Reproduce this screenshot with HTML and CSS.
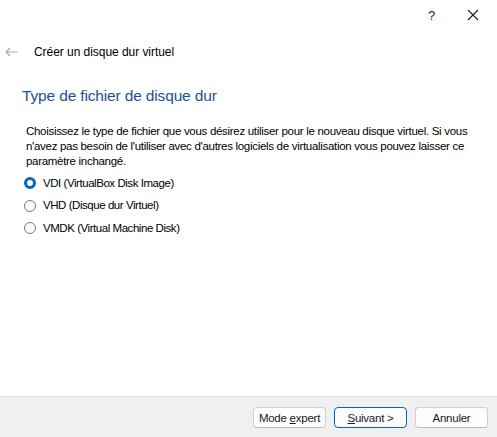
FILE: index.html
```html
<!DOCTYPE html>
<html lang="fr">
<head>
	<meta charset="utf-8" />
	<title>Créer un disque dur virtuel</title>
	<link rel="stylesheet" href="styles.css">
</head>
<body>
	<div class="dialog">
		<div class="titlebar">
			<span class="tb-help">?</span>
			<svg class="tb-close" width="12" height="12" viewBox="0 0 12 12">
				<path d="M1 1 L11 11 M11 1 L1 11" stroke="#1a1a1a" stroke-width="1.1" fill="none"/>
			</svg>
		</div>

		<div class="wizard-head">
			<svg class="back" width="13" height="10" viewBox="0 0 13 10">
				<path d="M12.5 5 H1.2 M5 1 L1 5 L5 9" stroke="#a8a8a8" stroke-width="1.1" fill="none"/>
			</svg>
			<span class="wizard-title">Créer un disque dur virtuel</span>
		</div>

		<div class="page">
			<h1>Type de fichier de disque dur</h1>
			<p class="desc">Choisissez le type de fichier que vous désirez utiliser pour le nouveau disque virtuel. Si vous n'avez pas besoin de l'utiliser avec d'autres logiciels de virtualisation vous pouvez laisser ce paramètre inchangé.</p>

			<ul class="choices">
				<li><span class="radio checked"></span>VDI (VirtualBox Disk Image)</li>
				<li><span class="radio"></span>VHD (Disque dur Virtuel)</li>
				<li><span class="radio"></span>VMDK (Virtual Machine Disk)</li>
			</ul>
		</div>

		<div class="buttons">
			<button class="btn">Mode <u>e</u>xpert</button>
			<button class="btn default"><u>S</u>uivant &gt;</button>
			<button class="btn">Annuler</button>
		</div>
	</div>
</body>
</html>
```

FILE: styles.css
```css
html, body{
	margin: 0;
	padding: 0;
	height: 100%;
}

body{
	background: #fff;
	font: 11.5px/15px "Liberation Sans", Arial, sans-serif;
	letter-spacing: -0.3px;
	color: #000;
}

.dialog{
	height: 100%;
	display: flex;
	flex-direction: column;
}

.titlebar{
	height: 30px;
	display: flex;
	align-items: center;
	justify-content: flex-end;
	padding-right: 18px;
	gap: 32px;
}

.tb-help{
	font-size: 13px;
	color: #1a1a1a;
}

.wizard-head{
	display: flex;
	align-items: center;
	height: 14px;
	margin-top: 15px;
	padding-left: 5px;
}

.wizard-head .back{
	margin-right: 16px;
}

.wizard-title{
	font-size: 12px;
	letter-spacing: -0.05px;
}

.page{
	flex: 1;
	padding: 0 20px 0 26px;
}

.page h1{
	margin: 27px 0 0 -4px;
	font-weight: normal;
	font-size: 15.5px;
	letter-spacing: -0.15px;
	line-height: 20px;
	color: #1e4f93;
}

.desc{
	margin: 18px 0 0 0;
	line-height: 15px;
}

.choices{
	list-style: none;
	margin: 3px 0 0 -2px;
	padding: 0;
	letter-spacing: -0.45px;
}

.choices li{
	display: flex;
	align-items: center;
	height: 22px;
	margin-bottom: 0.5px;
}

.radio{
	box-sizing: border-box;
	width: 12px;
	height: 12px;
	border-radius: 50%;
	border: 1px solid #7a7a7a;
	background: #fafafa;
	margin-right: 7px;
}

.radio.checked{
	border: 3.5px solid #0067c0;
	background: #fff;
}

.buttons{
	height: 40px;
	background: #f0f0f0;
	border-top: 1px solid #dfdfdf;
	display: flex;
	align-items: center;
	justify-content: flex-end;
	gap: 8px;
	padding-right: 9px;
}

.btn{
	width: 73px;
	height: 21px;
	margin-top: 1px;
	background: #fdfdfd;
	border: 1px solid #d0d0d0;
	border-bottom-color: #bcbcbc;
	border-radius: 4px;
	font: 11.5px "Liberation Sans", Arial, sans-serif;
	letter-spacing: -0.25px;
	color: #1a1a1a;
	padding: 0;
}

.btn.default{
	border: 1px solid #0067c0;
}
```
